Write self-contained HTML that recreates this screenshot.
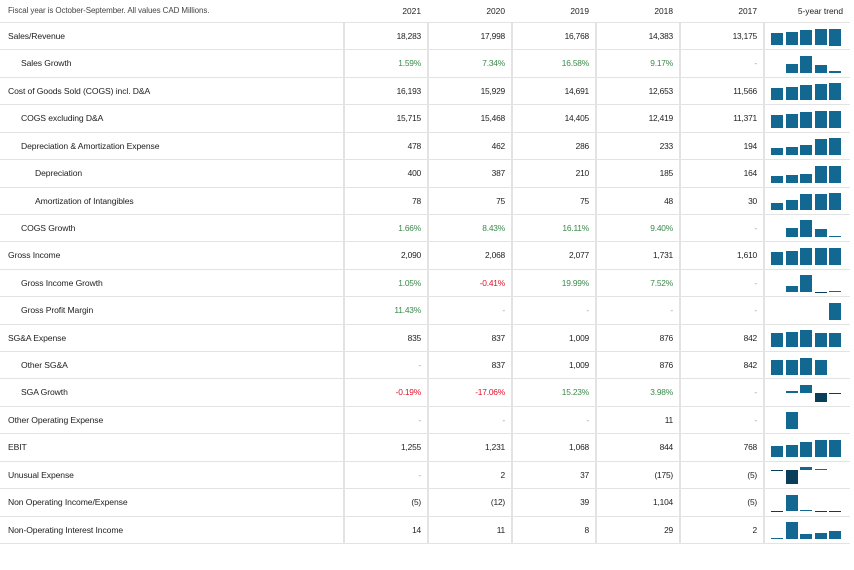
<!DOCTYPE html>
<html><head><meta charset="utf-8">
<style>
body{margin:0;background:#fff;width:854px;height:547px;overflow:hidden;font-family:"Liberation Sans",sans-serif;color:#222;position:relative}
.r{position:absolute;left:0;width:850px;height:27.42px;border-top:1.5px solid #e3e3e3;box-sizing:border-box}
.l{position:absolute;top:0;line-height:26.5px;font-size:8.6px;letter-spacing:-0.1px;white-space:nowrap}
.v{position:absolute;top:0;line-height:26.5px;font-size:8.4px;text-align:right;width:80px;letter-spacing:-0.2px}
.vl{position:absolute;top:0;width:1.5px;height:27.42px;background:#e3e3e3}
.g{color:#3a8a4a}.n{color:#e0102a}.d{color:#999}
.b{position:absolute;width:12px;background:#136891}
.bn{background:#0a3d5a}
.h{position:absolute;top:0;line-height:22px;font-size:8.4px;text-align:right;width:80px}
</style></head><body>
<div class="l" style="left:8px;line-height:22px;font-size:8px;color:#444">Fiscal year is October-September. All values CAD Millions.</div>
<div class="h" style="left:341px">2021</div>
<div class="h" style="left:425px">2020</div>
<div class="h" style="left:509px">2019</div>
<div class="h" style="left:593px">2018</div>
<div class="h" style="left:677px">2017</div>
<div class="h" style="left:763px;width:80px">5-year trend</div>
<div id="t"></div>
<script>
var rows=[
["Sales/Revenue",0,["18,283","17,998","16,768","14,383","13,175"],""],
["Sales Growth",1,["1.59%","7.34%","16.58%","9.17%","-"],"g"],
["Cost of Goods Sold (COGS) incl. D&A",0,["16,193","15,929","14,691","12,653","11,566"],""],
["COGS excluding D&A",1,["15,715","15,468","14,405","12,419","11,371"],""],
["Depreciation & Amortization Expense",1,["478","462","286","233","194"],""],
["Depreciation",2,["400","387","210","185","164"],""],
["Amortization of Intangibles",2,["78","75","75","48","30"],""],
["COGS Growth",1,["1.66%","8.43%","16.11%","9.40%","-"],"g"],
["Gross Income",0,["2,090","2,068","2,077","1,731","1,610"],""],
["Gross Income Growth",1,["1.05%","-0.41%","19.99%","7.52%","-"],"g"],
["Gross Profit Margin",1,["11.43%","-","-","-","-"],"g"],
["SG&A Expense",0,["835","837","1,009","876","842"],""],
["Other SG&A",1,["-","837","1,009","876","842"],""],
["SGA Growth",1,["-0.19%","-17.06%","15.23%","3.98%","-"],"g"],
["Other Operating Expense",0,["-","-","-","11","-"],""],
["EBIT",0,["1,255","1,231","1,068","844","768"],""],
["Unusual Expense",0,["-","2","37","(175)","(5)"],""],
["Non Operating Income/Expense",0,["(5)","(12)","39","1,104","(5)"],""],
["Non-Operating Interest Income",0,["14","11","8","29","2"],""]];
function num(s){if(s=="-")return null;var neg=s[0]=="("||s[0]=="-";var x=parseFloat(s.replace(/[(),%-]/g,""));return neg?-x:x;}
var h="";var RH=27.42;
rows.forEach(function(r,i){
var top=22+RH*i;
h+='<div class="r" style="top:'+top+'px">';
h+='<div class="l" style="left:'+[8,21,35][r[1]]+'px">'+r[0].replace("&","&amp;")+'</div>';
[343,427,511,595,679,763].forEach(function(x){h+='<div class="vl" style="left:'+x+'px"></div>'});
r[2].forEach(function(v,j){var c=v=="-"?"d":(r[3]?(v[0]=="-"?"n":"g"):"");
if(v.indexOf("(")==0)c="";
h+='<div class="v '+c+'" style="left:'+(341+84*j)+'px">'+v+'</div>';});
var vals=r[2].slice().reverse().map(num);
var nn=vals.filter(function(x){return x!==null});
var mx=Math.max(0,...nn),mn=Math.min(0,...nn);var H=17;
var base=5.5+H*mx/(mx-mn);
vals.forEach(function(v,j){if(v===null)return;var hh=Math.max(1,Math.abs(v)/(mx-mn)*H);
var x=771+14.5*j;
if(v>=0)h+='<div class="b" style="left:'+x+'px;top:'+(base-hh)+'px;height:'+hh+'px"></div>';
else h+='<div class="b bn" style="left:'+x+'px;top:'+base+'px;height:'+hh+'px"></div>';});
h+='</div>';});
h+='<div class="r" style="top:'+(22+RH*19)+'px"></div>';
document.getElementById("t").innerHTML=h;
</script>
</body></html>
